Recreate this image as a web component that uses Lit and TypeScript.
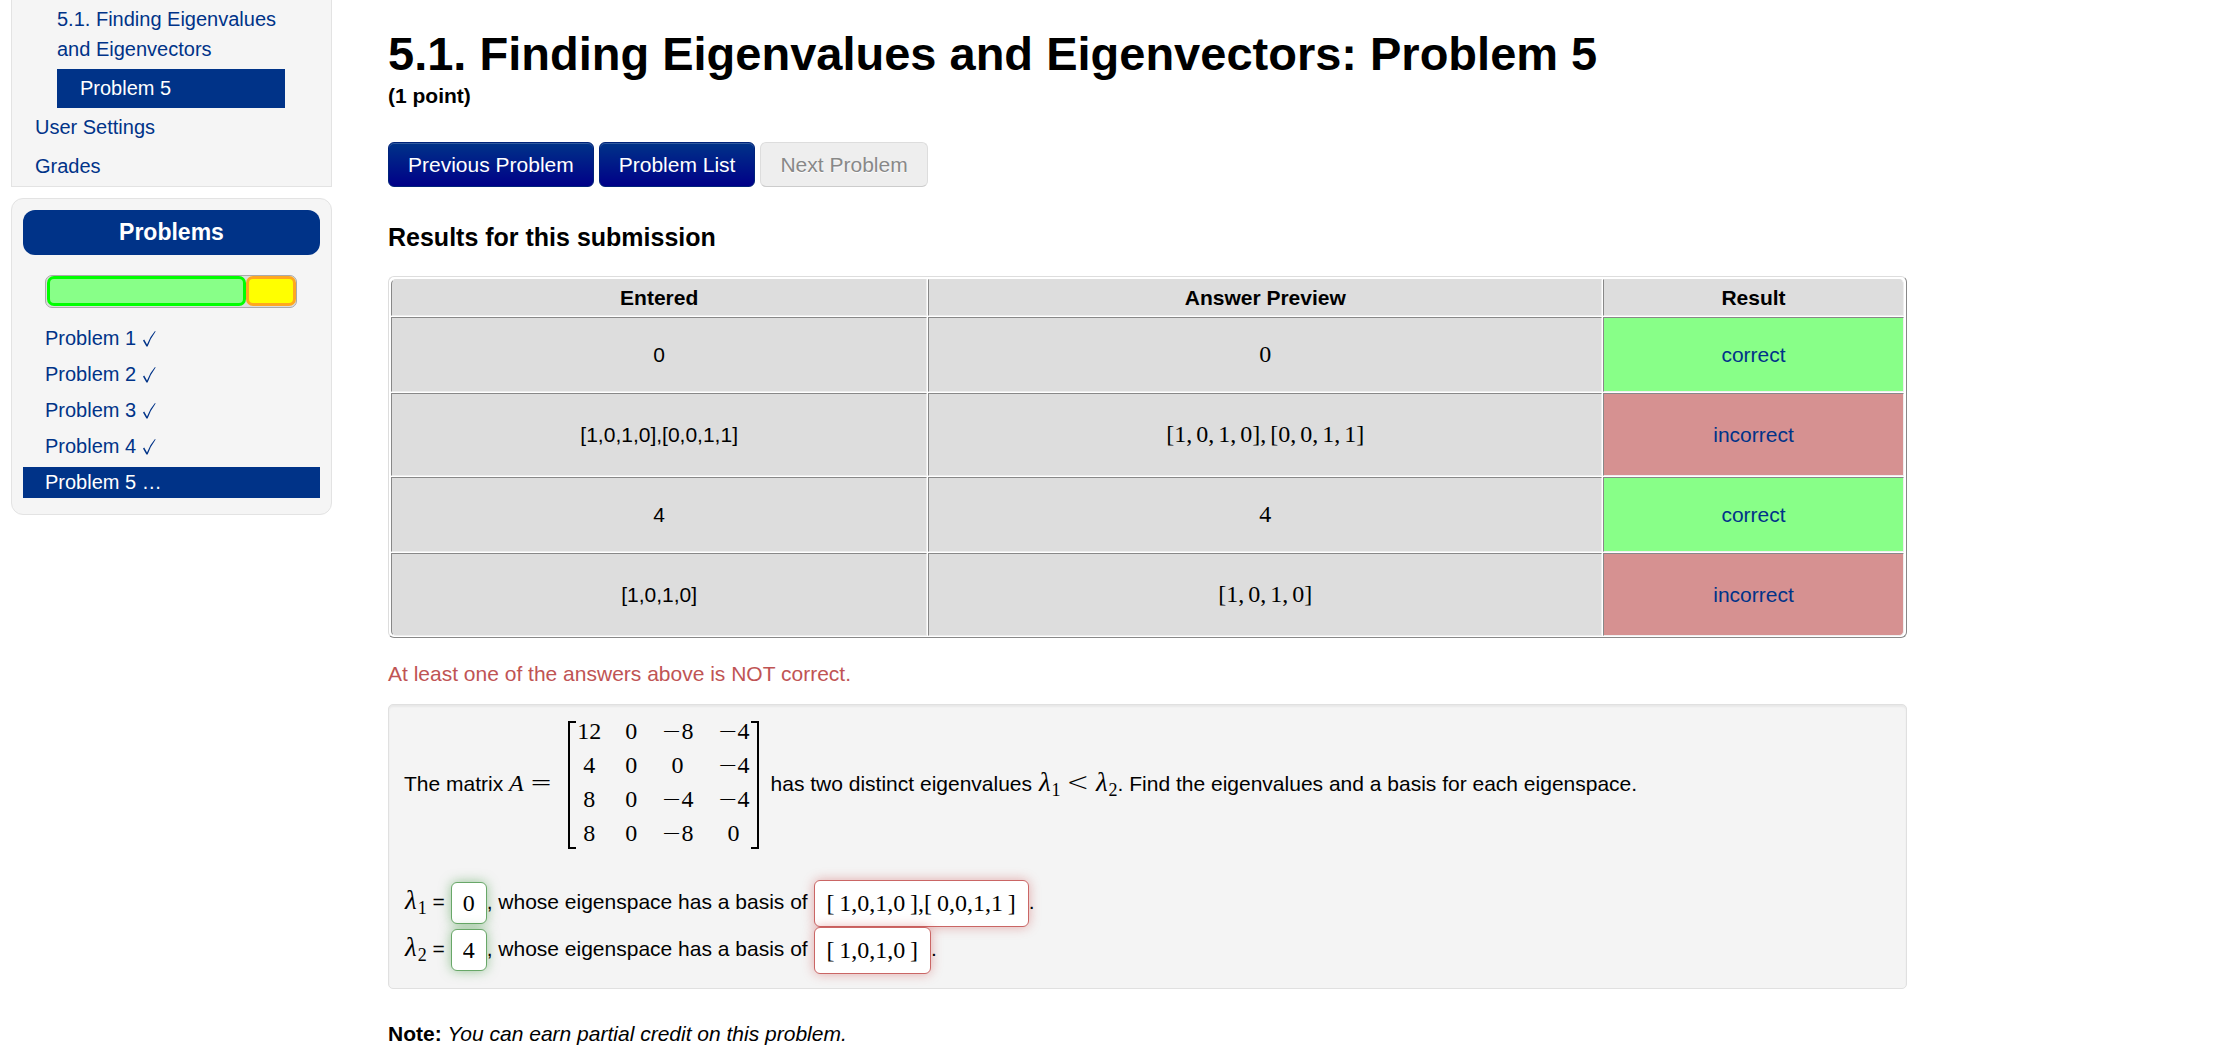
import { LitElement, html, css, svg } from "lit";
import { customElement } from "lit/decorators.js";
import { classMap } from "lit/directives/class-map.js";

interface Answer {
  entered: string;
  correct: boolean;
}

const ANSWERS: Answer[] = [
  { entered: "0", correct: true },
  { entered: "[1,0,1,0],[0,0,1,1]", correct: false },
  { entered: "4", correct: true },
  { entered: "[1,0,1,0]", correct: false },
];

const MATRIX: number[][] = [
  [12, 0, -8, -4],
  [4, 0, 0, -4],
  [8, 0, -4, -4],
  [8, 0, -8, 0],
];

const PROBLEMS = [1, 2, 3, 4, 5];
const CURRENT = 5;

const check = svg`<path d="M1 10.5 L2.2 9.6 L5 14.4 Q8 6.5 13 1 L13.6 1.4 Q8.6 8 5.6 16.4 L4.4 16.4 Z" fill="currentColor"/>`;

const number = (n: number) =>
  html`${n < 0 ? html`<span class="op">−</span>` : ""}${Math.abs(n)}`;

const lambda = (n: number) =>
  html`<span class="math"><i class="greek">λ</i><sub>${n}</sub></span>`;

/* Commas in typeset lists carry a thin space after them. */
const typeset = (text: string) =>
  [...text].map((c) => (c === "," ? html`<span class="comma">,</span>` : c));

@customElement("app-root")
export class AppRoot extends LitElement {
  static styles = css`
    :host {
      display: block;
      font: 20px/30px "Liberation Sans", Arial, sans-serif;
      color: #000;
      background: #fff;
    }
    * {
      box-sizing: border-box;
    }
    a {
      color: #038;
      text-decoration: none;
    }
    .page {
      display: grid;
      grid-template-columns: 321px minmax(0, 6fr) minmax(0, 1fr);
      column-gap: 56px;
      padding-left: 11px;
    }
    .sidebar {
      display: flex;
      flex-direction: column;
      gap: 11px;
    }
    .box {
      background: #f5f5f5;
      border: 1px solid #e3e3e3;
    }
    .nav {
      border-top: 0;
      padding: 4px 11px 0 23px;
    }
    .nav a {
      display: block;
      line-height: 39px;
    }
    .nav .sub {
      margin: 0 35px 0 22px;
    }
    .nav .set {
      line-height: 30px;
      padding-bottom: 5px;
    }
    .nav .active {
      padding-left: 23px;
    }
    .active {
      background: #038;
      color: #fff;
    }
    .problems {
      border-radius: 12px;
      padding: 11px 11px 16px;
    }
    .problems h2 {
      margin: 0;
      font-size: 23px;
      line-height: 45px;
      text-align: center;
      color: #fff;
      background: #038;
      border-radius: 12px;
    }
    .progress {
      display: flex;
      height: 33px;
      margin: 20px 23px 15px 22px;
      padding: 0 0 1px 1px;
      border: 1px solid #aaa;
      border-radius: 7px;
      background: #ddd;
    }
    .done,
    .todo {
      border: 3px solid #0f0;
      border-radius: 7px;
      background: #8f8;
      width: 80%;
    }
    .todo {
      border-color: #ffa81f;
      background: #ff0;
      width: 20%;
    }
    .problems ul {
      list-style: none;
      margin: 0;
      padding: 0;
      display: flex;
      flex-direction: column;
      gap: 5px;
    }
    .problems li a {
      display: block;
      line-height: 31px;
      padding-left: 22px;
    }
    .check {
      width: 14px;
      height: 17px;
      vertical-align: -2px;
    }
    main {
      font-size: 21px;
    }
    h1 {
      margin: 28px 0 0;
      font-size: 47px;
      line-height: 52px;
    }
    .points {
      margin: 0;
      font-weight: bold;
      line-height: 32px;
    }
    .actions {
      display: flex;
      gap: 5px;
      margin-top: 30px;
    }
    .actions a,
    .actions button {
      font: inherit;
      line-height: 43px;
      height: 45px;
      padding: 0 19px;
      border: 1px solid #00237a;
      border-radius: 6px;
      color: #fff;
      background: linear-gradient(#038, #008);
      box-shadow: inset 0 1px 0 rgba(255, 255, 255, 0.2);
    }
    .actions button:disabled {
      color: #888;
      background: #eee;
      border-color: #ddd #ddd #ccc;
      text-shadow: 0 1px 1px #fff;
      box-shadow: none;
    }
    h3 {
      margin: 35px 0 24px;
      font-size: 25px;
      line-height: 30px;
    }
    .results {
      width: 100%;
      table-layout: fixed;
      border-collapse: separate;
      border-spacing: 1px;
      padding: 1px 1px 0;
      border: 1px solid;
      border-color: #ddd #888 #888 #ddd;
      border-radius: 6px;
      text-align: center;
    }
    .results th,
    .results td {
      padding: 0;
      background: #ddd;
      border: 1px solid;
      border-color: #888 #eee #eee #888;
      height: 75px;
    }
    .results th {
      height: 37px;
      border-top-color: #ddd;
    }
    .results .wrong td {
      height: 83px;
    }
    .results .entered {
      width: 35.5%;
    }
    .results .result {
      width: 19.9%;
    }
    .results th:first-child {
      border-top-left-radius: 5px;
    }
    .results th:last-child {
      border-top-right-radius: 5px;
    }
    .results tr:last-child td:first-child {
      border-bottom-left-radius: 5px;
    }
    .results tr:last-child td:last-child {
      border-bottom-right-radius: 5px;
    }
    .results .right .verdict {
      background: #8f8;
    }
    .results .wrong .verdict {
      background: #d69191;
    }
    .math {
      font-family: "Liberation Serif", "Times New Roman", serif;
      font-size: 24px;
      white-space: nowrap;
    }
    .math sub {
      font-size: 18px;
      line-height: 0;
      vertical-align: -5px;
    }
    .greek {
      font-size: 27px;
      line-height: 0;
      margin: 0 1px;
    }
    .op {
      font-family: "DejaVu Sans Light", "DejaVu Sans", sans-serif;
      font-weight: 200;
      line-height: 0;
    }
    .rel {
      font-size: 27px;
    }
    .comma {
      margin-right: 4px;
    }
    .message {
      margin: 21px 0 15px;
      color: #bf5454;
    }
    .problem {
      padding: 16px 15px;
      background: #f4f4f4;
      border: 1px solid #e0e0e0;
      border-radius: 5px;
      box-shadow: inset 0 2px 2px rgba(0, 0, 0, 0.05);
    }
    .problem p {
      margin: 0 0 29px;
    }
    .matrix {
      display: inline-flex;
      vertical-align: middle;
      margin: 0 12px 0 16px;
    }
    .bracket {
      width: 8px;
      border: 2px solid #000;
      border-right: 0;
    }
    .bracket.close {
      border: 2px solid #000;
      border-left: 0;
    }
    .cells {
      display: grid;
      grid-template-columns: repeat(4, auto);
      column-gap: 24px;
      grid-auto-rows: 34px;
      justify-items: center;
      margin: -2px 1px -6px;
    }
    .cells span {
      line-height: 24px;
    }
    .cells .op {
      line-height: 0;
    }
    .answer {
      line-height: 47px;
      height: 47px;
      white-space: nowrap;
    }
    .answer input {
      font: 24px "Liberation Serif", "Times New Roman", serif;
      height: 47px;
      padding: 0 12px;
      border: 1px solid #ca6665;
      border-radius: 6px;
      background: #fff;
      vertical-align: middle;
      outline: 0;
      box-shadow: 0 0 12px rgba(200, 60, 60, 0.4);
      field-sizing: content;
    }
    .answer input.ok {
      height: 42px;
      padding: 0 11px;
      border-color: #68a768;
      box-shadow: 0 0 12px rgba(60, 150, 60, 0.5);
    }
    .note {
      margin: 30px 0 0;
    }
  `;

  private answerRow(n: number, value: string, basis: string) {
    return html`<div class="answer">
      ${lambda(n)} =
      <input class="ok" aria-label="Eigenvalue ${n}" .value=${value} />,
      whose eigenspace has a basis of
      <input
        aria-label="Basis of eigenspace ${n}"
        .value=${basis.replace(/\[/g, "[\u2009").replace(/\]/g, "\u2009]")}
      />.
    </div>`;
  }

  render() {
    return html`
      <div class="page">
        <aside class="sidebar">
          <nav class="box nav">
            <a class="sub set" href="#set">5.1. Finding Eigenvalues and Eigenvectors</a>
            <a class="sub active" href="#problem">Problem 5</a>
            <a href="#settings">User Settings</a>
            <a href="#grades">Grades</a>
          </nav>
          <section class="box problems">
            <h2>Problems</h2>
            <div class="progress">
              <div class="done"></div>
              <div class="todo"></div>
            </div>
            <ul>
              ${PROBLEMS.map(
                (n) => html`<li>
                  <a href="#problem-${n}" class=${classMap({ active: n === CURRENT })}
                    >Problem ${n}
                    ${n === CURRENT
                      ? "…"
                      : html`<svg class="check" viewBox="0 0 14 17" aria-hidden="true">${check}</svg>`}</a
                  >
                </li>`
              )}
            </ul>
          </section>
        </aside>
        <main>
          <h1>5.1. Finding Eigenvalues and Eigenvectors: Problem 5</h1>
          <p class="points">(1 point)</p>
          <div class="actions">
            <a href="#previous">Previous Problem</a>
            <a href="#list">Problem List</a>
            <button type="button" disabled>Next Problem</button>
          </div>
          <h3>Results for this submission</h3>
          <table class="results">
            <thead>
              <tr>
                <th class="entered">Entered</th>
                <th>Answer Preview</th>
                <th class="result">Result</th>
              </tr>
            </thead>
            <tbody>
              ${ANSWERS.map(
                (a) => html`<tr class=${a.correct ? "right" : "wrong"}>
                  <td>${a.entered}</td>
                  <td><span class="math">${typeset(a.entered)}</span></td>
                  <td class="verdict">
                    <a href="#answer">${a.correct ? "correct" : "incorrect"}</a>
                  </td>
                </tr>`
              )}
            </tbody>
          </table>
          <p class="message">At least one of the answers above is NOT correct.</p>
          <section class="problem">
            <p>
              The matrix <span class="math"><i>A</i> <span class="op rel">=</span></span
              ><span class="matrix math"
                ><span class="bracket"></span
                ><span class="cells"
                  >${MATRIX.flat().map((n) => html`<span>${number(n)}</span>`)}</span
                ><span class="bracket close"></span></span
              >has two distinct eigenvalues ${lambda(1)}
              <span class="math op rel">&lt;</span> ${lambda(2)}. Find the eigenvalues
              and a basis for each eigenspace.
            </p>
            ${this.answerRow(1, "0", "[1,0,1,0],[0,0,1,1]")}
            ${this.answerRow(2, "4", "[1,0,1,0]")}
          </section>
          <p class="note">
            <b>Note:</b> <i>You can earn partial credit on this problem.</i>
          </p>
        </main>
      </div>
    `;
  }
}
